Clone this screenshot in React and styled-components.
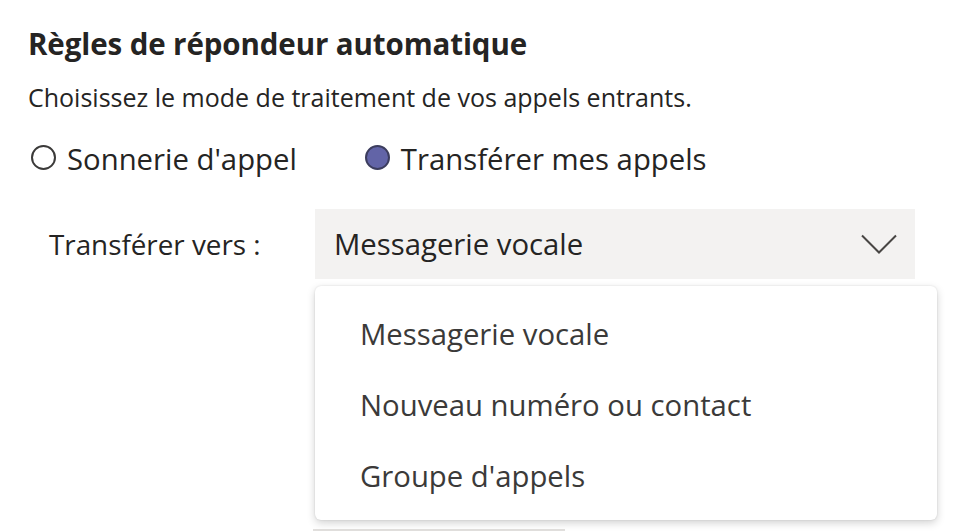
import React from "react";
import styled, { createGlobalStyle } from "styled-components";

const GlobalStyle = createGlobalStyle`
  html, body {
    margin: 0;
    padding: 0;
    background: #ffffff;
  }
  body {
    font-family: "Open Sans", "Noto Sans", "Liberation Sans", sans-serif;
    color: #252423;
  }
`;

// Page: whole settings panel
const Page = styled.div`
  width: 964px;
  height: 532px;
  overflow: hidden;
  padding: 26px 0 0 28px;
  box-sizing: border-box;
`;

const Title = styled.h2`
  margin: 0;
  font-size: 29.5px;
  font-weight: 700;
  line-height: 36px;
  color: #252423;
  letter-spacing: -0.1px;
`;

const Subtitle = styled.p`
  margin: 20px 0 0;
  font-size: 25px;
  line-height: 30px;
  color: #252423;
`;

const RadioRow = styled.div`
  display: flex;
  align-items: center;
  gap: 68px;
  margin-top: 27px;
  padding-left: 3px;
`;

const RadioLabel = styled.label`
  display: flex;
  align-items: center;
  gap: 11px;
  font-size: 29.3px;
  line-height: 40px;
  color: #252423;
`;

const RadioDot = styled.span`
  flex: none;
  width: 25px;
  height: 25px;
  border-radius: 50%;
  box-sizing: border-box;
  border: 2px solid ${(p) => (p.$checked ? "#3c3d5e" : "#3b3a39")};
  background: ${(p) => (p.$checked ? "#6264a7" : "#ffffff")};
  margin-top: -4px;
`;

const ForwardRow = styled.div`
  display: grid;
  grid-template-columns: 287px 600px;
  align-items: center;
  margin-top: 30px;
`;

const FieldLabel = styled.span`
  padding-left: 21px;
  font-size: 27.8px;
  color: #252423;
`;

const DropdownWrap = styled.div`
  position: relative;
`;

const Select = styled.div`
  height: 70px;
  background: #f3f2f1;
  display: flex;
  align-items: center;
  justify-content: space-between;
  padding: 0 18px 0 19px;
  font-size: 29.3px;
  color: #252423;
`;

const Menu = styled.ul`
  position: absolute;
  top: 77px;
  left: 0;
  z-index: 2;
  width: 622px;
  margin: 0;
  padding: 12px 0 9px;
  list-style: none;
  background: #ffffff;
  border-radius: 6px;
  box-shadow: 0 3px 8px rgba(0, 0, 0, 0.18), 0 0 2px rgba(0, 0, 0, 0.12);
`;

const MenuItem = styled.li`
  height: 71px;
  display: flex;
  align-items: center;
  padding-left: 45px;
  font-size: 29.3px;
  color: #3b3a39;
`;

// partially hidden field underneath the open menu
const HiddenField = styled.div`
  width: 252px;
  height: 90px;
  margin: 160px 0 0 285px;
  border-bottom: 2px solid #e1dfdd;
`;

const Chevron = () => (
  <svg width="36" height="21" viewBox="0 0 36 21" fill="none">
    <path d="M1 1.5 L18 18.5 L35 1.5" stroke="#484644" strokeWidth="2" />
  </svg>
);

export default function App() {
  return (
    <Page>
      <GlobalStyle />
      <Title>Règles de répondeur automatique</Title>
      <Subtitle>Choisissez le mode de traitement de vos appels entrants.</Subtitle>

      <RadioRow>
        <RadioLabel>
          <RadioDot />
          Sonnerie d'appel
        </RadioLabel>
        <RadioLabel>
          <RadioDot $checked />
          Transférer mes appels
        </RadioLabel>
      </RadioRow>

      <ForwardRow>
        <FieldLabel>Transférer vers :</FieldLabel>
        <DropdownWrap>
          <Select>
            Messagerie vocale
            <Chevron />
          </Select>
          <Menu>
            <MenuItem>Messagerie vocale</MenuItem>
            <MenuItem>Nouveau numéro ou contact</MenuItem>
            <MenuItem>Groupe d'appels</MenuItem>
          </Menu>
        </DropdownWrap>
      </ForwardRow>

      <HiddenField />
    </Page>
  );
}
